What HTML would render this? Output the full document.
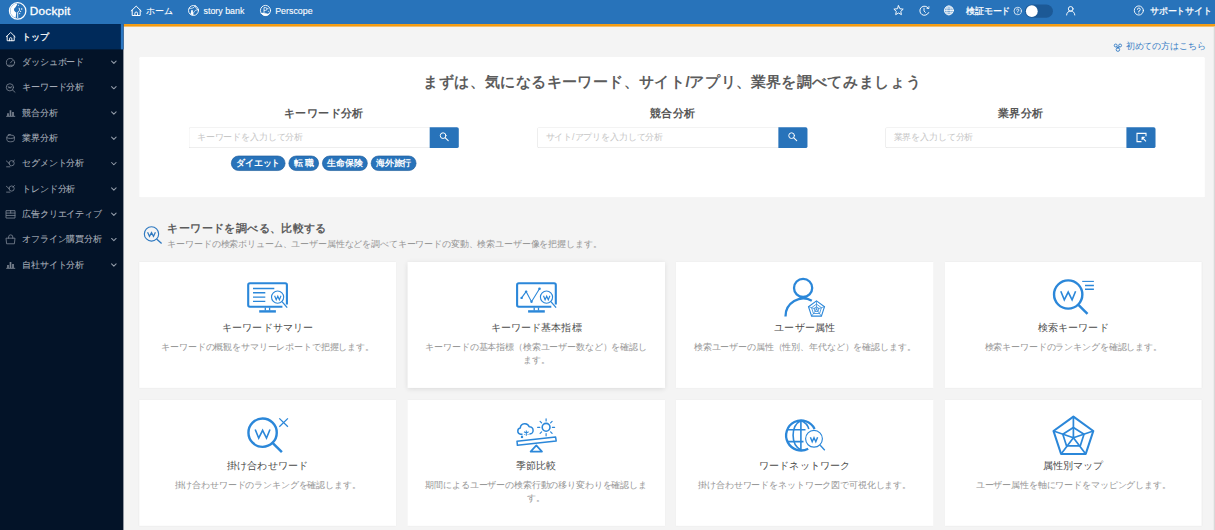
<!DOCTYPE html>
<html lang="ja">
<head>
<meta charset="utf-8">
<title>Dockpit</title>
<style>
*{box-sizing:border-box;margin:0;padding:0}
html,body{width:1215px;height:530px;overflow:hidden;background:#f4f4f4;font-family:"Liberation Sans",sans-serif;}
body{position:relative}
#root{position:absolute;left:0;top:0;width:1920px;height:838px;transform:scale(0.6328125);transform-origin:0 0;background:#f4f4f4;overflow:hidden}
#top{position:absolute;left:0;top:0;width:1920px;height:38px;background:#2873ba;color:#fff;font-size:14px}
#top .t{position:absolute;top:0;height:34.4px;line-height:34.4px;white-space:nowrap}
#orange{position:absolute;left:195px;top:38px;width:1725px;height:4.3px;background:#f39a0f}
#side{position:absolute;left:0;top:38px;width:194.5px;height:800px;background:#031328}
.si{position:absolute;left:0;width:194.5px;height:40px;color:#a8afba;font-size:14px;line-height:40.4px;padding-left:35px;white-space:nowrap;-webkit-text-stroke:.12px #a8afba}
.si.act{background:#002a5a;color:#fff;border-right:4px solid #2b77c2;-webkit-text-stroke:.4px #fff}
#first{position:absolute;right:15px;top:63px;height:21px;line-height:21px;font-size:14px;color:#3a80c6;white-space:nowrap}
#panel{position:absolute;left:220.1px;top:89.6px;width:1684.3px;height:222px;background:#fff;border-radius:2px;box-shadow:0 .5px 1px rgba(0,0,0,.05)}
#panel h1{position:absolute;left:0;width:100%;top:21.8px;height:36px;line-height:36px;text-align:center;font-size:24px;font-weight:bold;color:#5c5c5c;letter-spacing:-.33px}
.col{position:absolute;top:72px;width:427.5px}
.col h2{position:relative;top:1.3px}
.col h2{height:32px;line-height:32px;text-align:center;font-size:18px;font-weight:bold;color:#565656}
.col .inp{position:absolute;left:0;top:39.9px;width:382px;height:32.2px;border:1.4px solid #dcdcdc;border-right:none;border-radius:3px 0 0 3px;background:#fff;font-size:14px;line-height:29.6px;color:#c6c6c6;padding-left:12px;white-space:nowrap}
.col .btn{position:absolute;left:380.6px;top:39.9px;width:46.4px;height:32.2px;background:#2873ba;border-radius:0 3px 3px 0}
.tags{position:absolute;left:67px;top:84.5px;white-space:nowrap;font-size:0}
.tag{display:inline-block;height:24px;line-height:21px;border-radius:12px;background:#2873ba;border:1.5px solid #1d5c9c;color:#fff;font-size:14px;font-weight:bold;padding:0 7px;margin-right:5px;vertical-align:top}
#sec .ttl{position:absolute;left:264.5px;top:348px;font-size:18px;font-weight:bold;color:#5c5c5c;white-space:nowrap;line-height:24px}
#sec .sub{position:absolute;left:264.5px;top:375.6px;font-size:14px;color:#969696;white-space:nowrap;line-height:20px}
.card{position:absolute;width:406.7px;height:199.4px;background:#fff;box-shadow:0 0 2px rgba(0,0,0,.07);text-align:center}
.card.hov{box-shadow:0 2px 8px rgba(0,0,0,.11)}
.card .ct{position:absolute;left:0;width:100%;top:92px;height:24px;line-height:24px;font-size:16px;color:#4a4a4a}
.card .cd{position:absolute;left:24px;right:24px;top:124.3px;line-height:21px;font-size:14px;color:#969696}
</style>
</head>
<body>
<div id="root">
<div id="top">
<span class="t" style="left:46.62px;top:1.2px;font-size:16px;letter-spacing:.3px;-webkit-text-stroke:.42px #fff;transform:scaleX(1.165);transform-origin:0 50%">Dockpit</span>
<span class="t" style="left:231.51px;-webkit-text-stroke:.15px #fff">ホーム</span>
<span class="t" style="left:321.58px;-webkit-text-stroke:.15px #fff">story bank</span>
<span class="t" style="left:434.88px;-webkit-text-stroke:.15px #fff">Perscope</span>
<span class="t" style="left:1526.52px;-webkit-text-stroke:.4px #fff">検証モード</span>
<span class="t" style="left:1817.13px;-webkit-text-stroke:.4px #fff">サポートサイト</span>
</div>
<div id="orange"></div>
<div id="side">
<div class="si act" style="top:0px">トップ</div>
<div class="si" style="top:40px">ダッシュボード</div>
<div class="si" style="top:80px">キーワード分析</div>
<div class="si" style="top:120px">競合分析</div>
<div class="si" style="top:160px">業界分析</div>
<div class="si" style="top:200px">セグメント分析</div>
<div class="si" style="top:240px">トレンド分析</div>
<div class="si" style="top:280px">広告クリエイティブ</div>
<div class="si" style="top:320px">オフライン購買分析</div>
<div class="si" style="top:360px">自社サイト分析</div>
</div>
<div style="position:absolute;left:1917.9px;top:42.3px;width:2.1px;height:800px;background:#d9d9d9"></div>
<div id="first">初めての方はこちら</div>
<div id="panel">
<h1>まずは、気になるキーワード、サイト/アプリ、業界を調べてみましょう</h1>
<div class="col" style="left:77.91px"><h2>キーワード分析</h2><div class="inp">キーワードを入力して分析</div><div class="btn"></div><div class="tags"><span class="tag">ダイエット</span><span class="tag">転 職</span><span class="tag">生命保険</span><span class="tag">海外旅行</span></div></div>
<div class="col" style="left:628.94px"><h2>競合分析</h2><div class="inp">サイト/アプリを入力して分析</div><div class="btn"></div></div>
<div class="col" style="left:1178.86px"><h2>業界分析</h2><div class="inp">業界を入力して分析</div><div class="btn"></div></div>
</div>
<div id="sec"><div class="ttl">キーワードを調べる、比較する</div><div class="sub">キーワードの検索ボリューム、ユーザー属性などを調べてキーワードの変動、検索ユーザー像を把握します。</div></div>
<div class="card" style="left:219.5px;top:413.8px"><div class="ct">キーワードサマリー</div><div class="cd">キーワードの概観をサマリーレポートで把握します。</div></div>
<div class="card hov" style="left:643.9px;top:413.8px"><div class="ct">キーワード基本指標</div><div class="cd">キーワードの基本指標（検索ユーザー数など）を確認します。</div></div>
<div class="card" style="left:1068.2px;top:413.8px"><div class="ct">ユーザー属性</div><div class="cd">検索ユーザーの属性（性別、年代など）を確認します。</div></div>
<div class="card" style="left:1492.6px;top:413.8px"><div class="ct">検索キーワード</div><div class="cd">検索キーワードのランキングを確認します。</div></div>
<div class="card" style="left:219.5px;top:631.9px"><div class="ct">掛け合わせワード</div><div class="cd">掛け合わせワードのランキングを確認します。</div></div>
<div class="card" style="left:643.9px;top:631.9px"><div class="ct">季節比較</div><div class="cd">期間によるユーザーの検索行動の移り変わりを確認します。</div></div>
<div class="card" style="left:1068.2px;top:631.9px"><div class="ct">ワードネットワーク</div><div class="cd">掛け合わせワードをネットワーク図で可視化します。</div></div>
<div class="card" style="left:1492.6px;top:631.9px"><div class="ct">属性別マップ</div><div class="cd">ユーザー属性を軸にワードをマッピングします。</div></div>
</div>
<svg id="ov" style="position:absolute;left:0;top:0;pointer-events:none" width="1215" height="530" viewBox="0 0 1215 530">
<g transform="translate(0,0)" fill="none" stroke="#2b87d9">
<path d="M282.4 306.8H249.9Q248.2 306.8 248.2 305.1V284.9Q248.2 283.2 249.9 283.2H285.2Q286.9 283.2 286.9 284.9V304.6" stroke-width="2.1"/>
<path d="M265.3 307.5V310.5M269.6 307.5V310.5" stroke-width="1.3"/>
<path d="M259.2 311.4H275.9" stroke-width="2.4"/>
<circle cx="277.6" cy="297.1" r="6.1" stroke-width="1.15" fill="#fff"/>
<path d="M282 301.6L287.2 307.6" stroke-width="1.3"/>
<path d="M274.6 295.8L276.2 299.8L277.8 296.2L279.4 299.8L281 295.8" stroke-width="1.15" stroke-linejoin="miter"/>
</g>
<path d="M253 288.5H274.3M253 292.8H265.3M253 297.1H265.3M253 301.4H265.3" stroke="#2b87d9" stroke-width="1.4" fill="none"/>
<g transform="translate(268.9,0)" fill="none" stroke="#2b87d9">
<path d="M282.4 306.8H249.9Q248.2 306.8 248.2 305.1V284.9Q248.2 283.2 249.9 283.2H285.2Q286.9 283.2 286.9 284.9V304.6" stroke-width="2.1"/>
<path d="M265.3 307.5V310.5M269.6 307.5V310.5" stroke-width="1.3"/>
<path d="M259.2 311.4H275.9" stroke-width="2.4"/>
<circle cx="277.6" cy="297.1" r="6.1" stroke-width="1.15" fill="#fff"/>
<path d="M282 301.6L287.2 307.6" stroke-width="1.3"/>
<path d="M274.6 295.8L276.2 299.8L277.8 296.2L279.4 299.8L281 295.8" stroke-width="1.15" stroke-linejoin="miter"/>
</g>
<g stroke="#2b87d9" fill="#2b87d9"><path d="M521.6 297.9L526.1 291.6L531.5 301.7L539.5 288.8" fill="none" stroke-width="1.1"/><circle cx="521.6" cy="297.9" r="1.2" stroke="none"/><circle cx="526.1" cy="291.6" r="1.2" stroke="none"/><circle cx="531.5" cy="301.7" r="1.2" stroke="none"/><circle cx="539.5" cy="288.8" r="1.3" stroke="none"/></g>
<g fill="none" stroke="#2b87d9"><circle cx="803.1" cy="287.9" r="9.1" stroke-width="2.3"/><path d="M785.5 316.4A17.8 17.8 0 0 1 811.8 300.7" stroke-width="2.3" stroke-linecap="butt"/>
<path d="M816.5 300.9L824.5 306.7L821.4 316.1L811.6 316.1L808.5 306.7Z" stroke-width="1.1" fill="#fff"/><path d="M816.5 304.1L821.4 307.7L819.6 313.5L813.4 313.5L811.6 307.7Z" stroke-width=".8"/><path d="M816.5 306.7L819.0 308.5L818.0 311.4L815.0 311.4L814.0 308.5Z" stroke-width=".8"/>
<path d="M816.5 309.3L816.5 300.9M816.5 309.3L824.5 306.7M816.5 309.3L821.4 316.1M816.5 309.3L811.6 316.1M816.5 309.3L808.5 306.7" stroke-width=".7"/></g>
<g fill="none" stroke="#2b87d9">
<circle cx="1068.2" cy="294.5" r="14.15" stroke-width="2.4"/>
<path d="M1078.4 304.9L1087.5 313.9" stroke-width="2.5"/>
<path d="M1060.8 291.3L1064.3 299.9L1068.2 292.1L1072.1000000000001 299.9L1075.6000000000001 291.3" stroke-width="1.6" stroke-linejoin="miter"/>
</g>
<path d="M1082.2 281.4H1093.9" stroke="#2b87d9" stroke-width="1.1"/><path d="M1085 285.5H1093.9M1085 289.3H1093.9" stroke="#2b87d9" stroke-width="1.6"/>
<g fill="none" stroke="#2b87d9">
<circle cx="262.6" cy="432.7" r="14.15" stroke-width="2.4"/>
<path d="M272.8 443.09999999999997L281.90000000000003 452.09999999999997" stroke-width="2.5"/>
<path d="M255.20000000000002 429.5L258.70000000000005 438.09999999999997L262.6 430.3L266.5 438.09999999999997L270.0 429.5" stroke-width="1.6" stroke-linejoin="miter"/>
</g>
<path d="M279.3 418.4L287.9 426.8M287.9 418.4L279.3 426.8" stroke="#2b87d9" stroke-width="1.3"/>
<g fill="none" stroke="#2b87d9" stroke-linejoin="round">
<path d="M517 441.3L555.6 437L556.2 441L517.4 445.3Z" stroke-width="1.5"/>
<path d="M536.3 445.4L530.6 451.6H542Z" stroke-width="1.7"/>
<circle cx="546.1" cy="427.3" r="3.9" stroke-width="1.6"/>
<path d="M546.1 418.8V421M546.1 433.6V435.8M537.6 427.3H539.8M552.4 427.3H554.6M540.1 421.3L541.6 422.8M550.6 431.8L552.1 433.3M552.1 421.3L550.6 422.8M541.6 431.8L540.1 433.3" stroke-width="1.2" stroke-linecap="round"/>
<path d="M522.5 434.2H520.6A3.2 3.2 0 0 1 520.3 427.9A4.6 4.6 0 0 1 529.2 426.8A3.6 3.6 0 0 1 529.8 434H529.4" stroke-width="1.5"/>
<path d="M526.3 430.4V435.8M524 431.8L528.6 434.4M528.6 431.8L524 434.4" stroke-width="1.05"/>
<path d="M521.1 435.9L522.9 437.9M522.9 435.9L521.1 437.9" stroke-width="1.05"/>
</g>
<g fill="none" stroke="#2b87d9">
<path d="M808.2 448.7A15 15 0 1 1 814.6 428.9" stroke-width="2.3"/>
<path d="M800.9 420.5V450" stroke-width="1.6"/>
<path d="M800.9 420.5C790.5 426 790.5 444.5 800.9 450" stroke-width="1.6"/>
<path d="M800.9 420.5C805.5 422.5 808 425.5 808.8 429" stroke-width="1.6"/>
<path d="M787 429.8H805.5M787 441.6H803.5" stroke-width="1.6"/>
<circle cx="814" cy="438.8" r="8.4" stroke-width="1.15" fill="#fff"/>
<path d="M820.2 445.2L824.8 450.2" stroke-width="1.3"/>
<path d="M810.4 437.3L812.2 441.7L814 437.8L815.8 441.7L817.6 437.3" stroke-width="1.45"/>
</g>
<g fill="none" stroke="#2b87d9" stroke-linejoin="round"><path d="M1073.4 416.6L1093.3 431.0L1085.7 454.0L1061.1 454.0L1053.5 431.0Z" stroke-width="2.1"/><path d="M1073.4 427.5L1084.0 434.3L1080.3 445.8L1066.5 445.8L1062.8 434.3Z" stroke-width="1.7"/><path d="M1073.4 437.8L1073.4 416.6M1073.4 437.8L1093.3 431M1073.4 437.8L1085.7 454M1073.4 437.8L1061.1 454M1073.4 437.8L1053.5 431" stroke-width="1.7"/></g>
<g fill="none" stroke="#2d78c0"><circle cx="151.5" cy="233.9" r="7.15" stroke-width="1.15"/><path d="M156.6 239L161.6 243.6" stroke-width="1.3"/><path d="M147.6 232.2L149.5 236.4L151.5 232.6L153.5 236.4L155.4 232.2" stroke-width="1.25"/></g>
<g fill="none" stroke="#fff" stroke-linejoin="round" stroke-linecap="round">
<circle cx="17.65" cy="10.9" r="8.2" stroke-width="1.25"/>
<path d="M17.2 3.6A7.3 7.3 0 0 0 15.6 17.9L16.3 12.6C13.6 11.4 13.4 8.6 15.3 7.6C16.2 5.9 17.2 5.6 17.2 3.6Z" fill="#fff" stroke="none"/>
<path d="M17.7 17.6V12.2C19.6 11.6 20 9.6 19.2 8.2" stroke-width=".9"/>
<circle cx="21.7" cy="9.1" r=".75" fill="#fff" stroke="none"/><circle cx="20.6" cy="11.3" r=".6" fill="#fff" stroke="none"/><circle cx="19.7" cy="13.6" r=".6" fill="#fff" stroke="none"/><circle cx="18.4" cy="5.2" r=".5" fill="#fff" stroke="none"/>
<path transform="translate(136.2,10.7) scale(1.0)" d="M-5 0.3L0 -4.6L5 0.3M-4 -0.5V4.8H4V-0.5M-1.3 4.8V2.6A1.3 1.3 0 0 1 1.3 2.6V4.8" stroke="#fff" stroke-width="1.0"/>
<circle cx="193.5" cy="10.5" r="5" stroke-width=".9"/>
<path d="M189.3 8.4C191.5 8.9 194 8 195.2 5.9M195.2 5.9C195.4 8 196.6 9.3 198.3 9.6M198.3 9.6C196 9.8 194.3 10.8 193.6 12.6" stroke-width=".7"/>
<path d="M190.6 14.6C190.4 13 190.9 12.3 191.4 12C190.6 11.2 191 9.9 192 9.9C193 9.9 193.4 11.2 192.6 12C193.3 12.4 193.6 13.4 193.5 15.2Z" fill="#fff" stroke="none"/>
<circle cx="265.5" cy="10.45" r="5.05" stroke-width=".9"/>
<path d="M261.2 13.3C263 12.6 265 12.9 266.3 13.6C267.6 14.2 268.9 13.9 269.9 13.2A5.05 5.05 0 0 1 261.2 13.3Z" fill="#fff" stroke="#fff" stroke-width=".4"/>
<path d="M264 12.4V7.6H265.6A1.4 1.4 0 0 1 265.6 10.4H264.4" stroke-width=".8"/><circle cx="267.9" cy="8.6" r=".6" fill="#fff" stroke="none"/><circle cx="268.3" cy="11.3" r=".5" fill="#fff" stroke="none"/>
<path d="M898.55 5.75L899.93 8.75L903.21 9.14L900.78 11.38L901.43 14.61L898.55 13.00L895.67 14.61L896.32 11.38L893.89 9.14L897.17 8.75Z" stroke-width=".95"/>
<path d="M928.4 8.3A4.6 4.6 0 1 0 928.7 12.6" stroke-width=".95"/><path d="M928.9 6.6V8.5H927" stroke-width=".8"/><path d="M924 8.2V11L925.4 12.4" stroke-width=".9"/>
<circle cx="948.9" cy="10.4" r="4.45" stroke-width=".9" fill="rgba(255,255,255,.35)"/><path d="M944.6 10.4H953.2M945.4 8H952.4M945.4 12.8H952.4" stroke-width=".8"/><ellipse cx="948.9" cy="10.4" rx="2.1" ry="4.4" stroke-width=".6"/>
<circle cx="1017.7" cy="11" r="3.7" stroke-width=".75"/><path d="M1016.6 10A1.15 1.15 0 1 1 1017.75 11.2V11.9" stroke-width=".75"/><circle cx="1017.75" cy="13" r=".45" fill="#fff" stroke="none"/>
<rect x="1024.9" y="4.6" width="28" height="13.2" rx="6.6" fill="#1c5996" stroke="none"/><circle cx="1031.8" cy="11.2" r="5.9" fill="#fff" stroke="none"/>
<circle cx="1070.7" cy="8.9" r="2.35" stroke-width=".95"/><path d="M1066.6 15A4.1 4.1 0 0 1 1074.8 15" stroke-width=".95"/>
<circle cx="1138.85" cy="10.5" r="4.55" stroke-width=".9"/><path d="M1137.4 9.4A1.45 1.45 0 1 1 1138.85 10.9V11.8" stroke-width=".9"/><circle cx="1138.85" cy="13.1" r=".55" fill="#fff" stroke="none"/>
<circle cx="443.1" cy="135.65" r="2.85" stroke-width="1"/><path d="M445.3 137.9L448.20000000000005 140.6" stroke-width="1.1"/>
<circle cx="791.6" cy="135.65" r="2.85" stroke-width="1"/><path d="M793.8000000000001 137.9L796.7 140.6" stroke-width="1.1"/>
<g transform="translate(.7,0)"><path d="M1145.3 136.2V133.4H1136.3V141.6H1140.8" stroke-width="1.1" stroke-linejoin="miter" stroke-linecap="butt"/><path d="M1141.6 137.6L1145.3 141.3M1141.4 140V137.4H1144" stroke-width="1.1" stroke-linecap="butt"/></g>
</g>
<g fill="none" stroke="#3a80c6" stroke-width=".95"><circle cx="1115.7" cy="45.5" r="1.45"/><circle cx="1120.1" cy="45.5" r="1.45"/><circle cx="1117.9" cy="49.6" r="1.75"/><path d="M1116.6 46.6L1117.9 47.9L1119.2 46.6" stroke-width="1.3"/></g>
<g fill="none" stroke="#7f8895" stroke-width=".8" stroke-linecap="round" stroke-linejoin="round">
<path transform="translate(10.7,36.5) scale(.88)" d="M-5 0.3L0 -4.6L5 0.3M-4 -0.5V4.8H4V-0.5M-1.3 4.8V2.6A1.3 1.3 0 0 1 1.3 2.6V4.8" stroke="#fff" stroke-width="1.05"/>
<circle cx="10.5" cy="62.58" r="4.1"/><path d="M10.5 62.88L12.4 60.68M7.6 65.28H13.4"/>
<circle cx="9.9" cy="87.31" r="3.6"/><path d="M12.5 90.01L15 92.21M8.3 86.61L9.1 88.21L9.9 86.81L10.7 88.21L11.5 86.61" />
<path d="M6.6 116.34H14.8" stroke-width=".9"/><path d="M8 115.94V113.14M10.5 115.94V110.14M13 115.94V111.94" stroke-width="1.7" stroke-linecap="butt" stroke="#79828f"/>
<path d="M6.8 137.07C6.8 135.46999999999997 8.6 135.17 10.6 135.17C12.6 135.17 14.4 135.46999999999997 14.4 137.07V139.67C14.4 141.36999999999998 12.6 141.76999999999998 10.6 141.76999999999998C8.6 141.76999999999998 6.8 141.36999999999998 6.8 139.67ZM6.8 137.67C8 138.76999999999998 13.2 138.76999999999998 14.4 137.67M8.4 135.26999999999998V134.46999999999997H10.4"/>
<path d="M6.4 161.0L9 163.2M9 163.2A2.6 2.6 0 1 0 14.2 163.2A2.6 2.6 0 1 0 9 163.2M14.4 160.2L12.8 161.79999999999998M6.6 166.79999999999998H10"/>
<path d="M6.4 186.33L9 188.53M9 188.53A2.6 2.6 0 1 0 14.2 188.53A2.6 2.6 0 1 0 9 188.53M14.4 185.53L12.8 187.13M6.6 192.13H10"/>
<rect x="6.4" y="210.66" width="8.6" height="7.4"/><path d="M6.4 213.06H15M6.4 215.45999999999998H15M10.7 210.66V213.06" />
<path d="M6.4 238.18999999999997H15L14.4 243.78999999999996H7ZM8.6 238.18999999999997V236.98999999999998A2.1 2.1 0 0 1 12.8 236.98999999999998V238.18999999999997"/>
<path d="M6.6 268.31999999999994H14.8" stroke-width=".9"/><path d="M8 267.91999999999996V265.11999999999995M10.5 267.91999999999996V262.11999999999995M13 267.91999999999996V263.91999999999996" stroke-width="1.7" stroke-linecap="butt" stroke="#79828f"/>
</g>
<g fill="none" stroke="#949daa" stroke-width="1.05" stroke-linecap="round" stroke-linejoin="round">
<path d="M111.6 61.18L113.85 63.43L116.1 61.18"/>
<path d="M111.6 86.51L113.85 88.76L116.1 86.51"/>
<path d="M111.6 111.84L113.85 114.09L116.1 111.84"/>
<path d="M111.6 137.17L113.85 139.42L116.1 137.17"/>
<path d="M111.6 162.5L113.85 164.75L116.1 162.5"/>
<path d="M111.6 187.83L113.85 190.08L116.1 187.83"/>
<path d="M111.6 213.16L113.85 215.41L116.1 213.16"/>
<path d="M111.6 238.48999999999998L113.85 240.73999999999998L116.1 238.48999999999998"/>
<path d="M111.6 263.81999999999994L113.85 266.06999999999994L116.1 263.81999999999994"/>
</g>
</svg>
</body>
</html>
